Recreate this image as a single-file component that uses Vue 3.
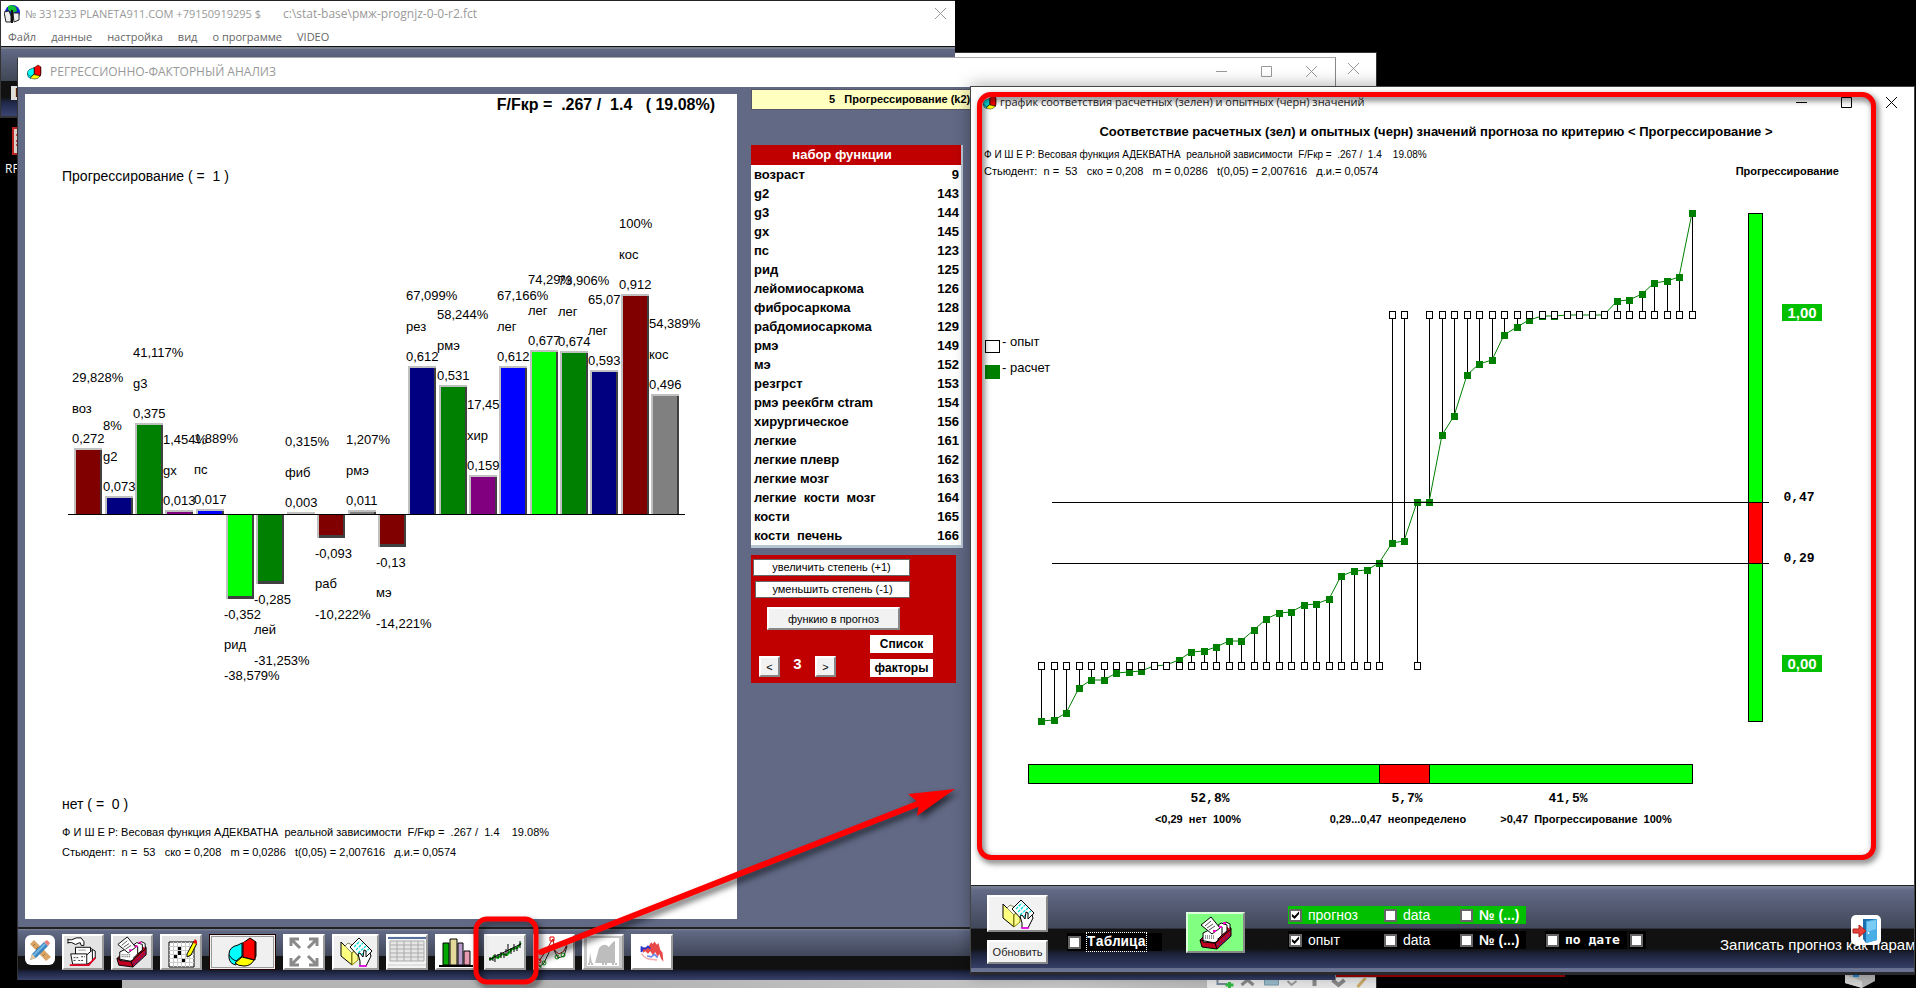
<script setup>
const bars = [
  { n: 'воз', v: '0,272', p: '29,828%', x: 74, h: 66, c: '#800000' },
  { n: 'g2', v: '0,073', p: '8%', x: 105, h: 18, c: '#000080' },
  { n: 'g3', v: '0,375', p: '41,117%', x: 135, h: 91, c: '#008000' },
  { n: 'gx', v: '0,013', p: '1,454%', x: 165, h: 4, c: '#800080' },
  { n: 'пс', v: '0,017', p: '1,889%', x: 196, h: 5, c: '#0000ff' },
  { n: 'рид', v: '-0,352', p: '-38,579%', x: 226, h: -85, c: '#00ff00' },
  { n: 'лей', v: '-0,285', p: '-31,253%', x: 256, h: -70, c: '#008000' },
  { n: 'фиб', v: '0,003', p: '0,315%', x: 287, h: 2, c: '#c0c0c0' },
  { n: 'раб', v: '-0,093', p: '-10,222%', x: 317, h: -24, c: '#800000' },
  { n: 'рмэ', v: '0,011', p: '1,207%', x: 348, h: 4, c: '#808080' },
  { n: 'мэ', v: '-0,13', p: '-14,221%', x: 378, h: -33, c: '#800000' },
  { n: 'рез', v: '0,612', p: '67,099%', x: 408, h: 148, c: '#000080' },
  { n: 'рмэ', v: '0,531', p: '58,244%', x: 439, h: 129, c: '#008000' },
  { n: 'хир', v: '0,159', p: '17,45', x: 469, h: 39, c: '#800080' },
  { n: 'лег', v: '0,612', p: '67,166%', x: 499, h: 148, c: '#0000ff' },
  { n: 'лег', v: '0,677', p: '74,29%', x: 530, h: 164, c: '#00ff00' },
  { n: 'лег', v: '0,674', p: '73,906%', x: 560, h: 163, c: '#008000' },
  { n: 'лег', v: '0,593', p: '65,07', x: 590, h: 144, c: '#000080' },
  { n: 'кос', v: '0,912', p: '100%', x: 621, h: 220, c: '#800000' },
  { n: 'кос', v: '0,496', p: '54,389%', x: 651, h: 120, c: '#808080' },
].map((b) => {
  const up = b.h > 0
  const edge = 514 - b.h
  return {
    ...b,
    up,
    top: up ? edge : 514,
    len: Math.abs(b.h),
    tx: b.x - 2,
    ys: up ? [edge - 5, edge - 35, edge - 66] : [edge + 20, edge + 50, edge + 81],
  }
})

const factors = [
  ['возраст', 9], ['g2', 143], ['g3', 144], ['gx', 145], ['пс', 123], ['рид', 125],
  ['лейомиосаркома', 126], ['фибросаркома', 128], ['рабдомиосаркома', 129], ['рмэ', 149],
  ['мэ', 152], ['резгрст', 153], ['рмэ реекбгм ctram', 154], ['хирургическое', 156],
  ['легкие', 161], ['легкие плевр', 162], ['легкие мозг', 163], ['легкие  кости  мозг', 164],
  ['кости', 165], ['кости  печень', 166],
]

const calc = [
  721, 720, 713, 688, 680, 680, 673, 672, 671, 666, 665, 660, 652, 651, 647, 641, 641, 630, 619,
  613, 612, 605, 604, 599, 576, 571, 570, 563, 543, 541, 502, 502, 435, 416, 375, 364, 360, 335,
  327, 320, 316, 316, 315, 315, 315, 315, 301, 300, 294, 283, 281, 277, 213,
]
const points = calc.map((y, i) => ({
  x: Math.round(1041 + (i * 651) / 52),
  y,
  e: i < 28 || i === 30 ? 666 : 315,
}))
const line = points.map((p) => `${p.x},${p.y}`).join(' ')
const menu = ['Файл', 'данные', 'настройка', 'вид', 'о программе', 'VIDEO']
const fisher = 'Ф И Ш Е Р: Весовая функция АДЕКВАТНА  реальной зависимости  F/Fкр =  .267 /  1.4    19.08%'
const student = 'Стьюдент:  n =  53   ско = 0,208   m = 0,0286   t(0,05) = 2,007616   д.и.= 0,0574'
</script>

<template>
  <main class="desktop">
    <svg class="defs" aria-hidden="true">
      <symbol id="pie" viewBox="0 0 30 30">
        <path d="M14 6 10 8Q1 10 1 17v4q1 6 7 7l6-9z" fill="#0ff" stroke="#000" />
        <path d="M15 6 22 1l6 4v14l-2 4-11-3z" fill="#f00" stroke="#000" />
        <path d="M15 5v15l12 3V5" fill="#f00" stroke="#000" />
        <path d="M14 20 26 23q-3 6-10 6-6 0-9-3z" fill="#ff0" stroke="#000" />
        <path d="M1 18q3 5 7 6l6-5" fill="none" stroke="#000" />
      </symbol>
      <symbol id="folder" viewBox="0 0 34 32">
        <path d="M2 6 13 17v12L2 20z" fill="#ffff80" stroke="#000" />
        <path d="M13 17 18 11 9 7 6 10z" fill="#ffe" stroke="#886" />
        <path d="M13 29 19 24V12l-6 5z" fill="#ffff90" stroke="#880" />
        <path d="M11 11 20 2 33 15 24 25z" fill="#fff" stroke="#000" />
        <path d="M15 11 21 5M17 14 24 7M19 17 27 10M22 19 30 13" stroke="#0dd" stroke-width="1.3" stroke-dasharray="3 1" />
        <path d="M21 30v-5l-2-7 2-1 3 4 1-7 2 1v6l4-4 1 3-3 6-2 4z" fill="#fff" stroke="#000" />
        <path d="M20 30h8" stroke="#f0f" stroke-width="1.5" />
      </symbol>
      <symbol id="cards" viewBox="0 0 34 34">
        <path d="M1 24 7 18 26 9 32 12v8L18 33 3 31z" fill="#c00020" stroke="#000" />
        <path d="M4 26V17l6-3 9 2v9l-4 2z" fill="#fff" stroke="#000" />
        <path d="M12 15V12l5-3 6 2v8l-4 4M18 10l4-3 6 2v6l-5 4M24 8l3-2 4 2v5" fill="#fff" stroke="#000" />
        <path d="M2 9 12 1l9 11-8 6z" fill="#fff" stroke="#000" />
        <path d="M6 10 12 5M8 12 14 8M10 14 16 10" stroke="#555" />
        <path d="M6 20h9M6 22h9" stroke="#333" stroke-dasharray="1 1" />
        <path d="M1 24 16 27 32 13M16 27l2 6" fill="none" stroke="#000" />
        <path d="M18 29 32 16M20 30 32 19" stroke="#33c" stroke-dasharray="2 2" />
        <path d="M14 15h3M20 11h3M24 7h3" stroke="#f0c" stroke-width="2" />
      </symbol>
    </svg>

    <div class="shortcut">
      <svg width="30" height="28" viewBox="0 0 30 28"><path d="M1 1h28v26H1z" fill="#d8cfc8" stroke="#b22" stroke-width="2" /><path d="M4 8h22M4 14h22M4 18h22" stroke="#b44" stroke-width="2" /></svg>
      <span>RF.</span>
    </div>

    <section class="win back">
      <header class="titlebar"><button class="sys" aria-label="Закрыть"><svg width="11" height="11"><path d="M0 0 11 11M11 0 0 11" /></svg></button></header>
      <div class="back-body"></div>
      <footer class="back-tools">
        <svg width="160" height="10" viewBox="0 0 160 10">
          <path d="M6 0V6H16" fill="none" stroke="#789" stroke-width="2" />
          <path d="M18 4v6M14 7h8" stroke="#3b4" stroke-width="3" />
          <path d="M30 7 36 2l6 5" fill="none" stroke="#888" stroke-width="3" />
          <path d="M53 0v7h14V0" fill="#9bc" stroke="#79a" />
          <path d="M76 3 80 7l5-4" fill="none" stroke="#999" stroke-width="2" />
          <path d="M103 0v8M121 2l6 5 6-5" fill="none" stroke="#888" stroke-width="4" />
          <path d="M146 9 154 0" stroke="#ca6" stroke-width="3" />
        </svg>
      </footer>
    </section>
    <div class="red-edge"></div>
    <svg class="cube" width="30" height="13" viewBox="0 0 30 13"><path d="M0 0h30v6L17 13 0 8z" fill="#b9b9b9" /><path d="M17 6v7L0 8V0z" fill="#d8d8d8" /><path d="M8 0h6v2H8z" fill="#28c" /></svg>

    <section class="win first">
      <header class="titlebar">
        <svg class="tico" width="17" height="18" viewBox="0 0 17 18">
          <circle cx="8.500" cy="7.500" r="7.500" fill="#1020d0" />
          <path d="M4 1Q8-1 12 2l1 4-4 2-5-3zM1 9l4-2 2 5-2 2z" fill="#10c030" />
          <path d="M0 7 5 6l2 5v6H2zM9 8h6v7l-5 2z" fill="#eee" stroke="#222" />
          <path d="M8 5v13" stroke="#111" stroke-width="2" />
        </svg>
        <span>№ 331233 PLANETA911.COM +79150919295 $</span>
        <span class="path">c:\stat-base\рмж-prognjz-0-0-r2.fct</span>
        <button class="sys end" aria-label="Закрыть"><svg width="11" height="11"><path d="M0 0 11 11M11 0 0 11" /></svg></button>
      </header>
      <nav class="menu"><button v-for="m in menu" :key="m">{{ m }}</button></nav>
      <div class="first-body"><span class="first-tag">E</span></div>
    </section>

    <section class="win analysis">
      <header class="titlebar">
        <svg class="tico" width="15" height="16"><use href="#pie" /></svg>
        <span>РЕГРЕССИОННО-ФАКТОРНЫЙ АНАЛИЗ</span>
        <button class="sys end" aria-label="Свернуть"><svg width="11" height="11"><path d="M0 5.500H11" /></svg></button>
        <button class="sys" aria-label="Развернуть"><svg width="11" height="11"><path d="M.5.5h10v10H.5z" /></svg></button>
        <button class="sys" aria-label="Закрыть"><svg width="11" height="11"><path d="M0 0 11 11M11 0 0 11" /></svg></button>
      </header>
      <div class="body">
        <div class="sheet">
          <h1>{{ 'F/Fкр =  .267 /  1.4   ( 19.08%)' }}</h1>
          <svg class="chart" viewBox="25 116 712 674">
            <text class="cat" x="62" y="181">{{ 'Прогрессирование ( =  1 )' }}</text>
            <g v-for="(b, i) in bars" :key="i">
              <rect :x="b.x" :y="b.top" width="28" :height="b.len" :fill="b.c" />
              <rect :x="b.x" :y="b.top" width="2" :height="b.len" fill="#c0c0c0" />
              <rect :x="b.x + 26" :y="b.top" width="2" :height="b.len" fill="#404040" />
              <rect v-if="b.up" :x="b.x" :y="b.top" width="28" height="2" fill="#c0c0c0" />
              <rect v-else :x="b.x + 2" :y="b.top + b.len - 3" width="26" height="3" fill="#404040" />
            </g>
            <g v-for="(b, i) in bars" :key="'t' + i" class="lab">
              <text :x="b.tx" :y="b.ys[0]">{{ b.v }}</text>
              <text :x="b.tx" :y="b.ys[1]">{{ b.n }}</text>
              <text :x="b.tx" :y="b.ys[2]">{{ b.p }}</text>
            </g>
            <path d="M68 514.500H685" stroke="#000" />
          </svg>
          <div class="notes">
            <p class="cat">{{ 'нет ( =  0 )' }}</p>
            <p>{{ fisher }}</p>
            <p>{{ student }}</p>
          </div>
        </div>
        <aside class="side">
          <div class="target">{{ '5   Прогрессирование (k2)' }}</div>
          <table class="factors">
            <thead><tr><th colspan="2">набор функции</th></tr></thead>
            <tbody><tr v-for="f in factors" :key="f[1]"><td>{{ f[0] }}</td><td>{{ f[1] }}</td></tr></tbody>
          </table>
          <div class="panel">
            <button class="flat">увеличить степень (+1)</button>
            <button class="flat second">уменьшить степень (-1)</button>
            <button class="raised">функию в прогноз</button>
            <div class="step">
              <button class="raised">&lt;</button><b>3</b><button class="raised">&gt;</button>
              <div class="lists"><button>Список</button><button>факторы</button></div>
            </div>
          </div>
        </aside>
      </div>
      <footer class="tools">
        <button class="pencil" aria-label="Инструменты"><svg width="30" height="30" viewBox="0 0 30 30"><path d="M5 9 9 5 26 22 21 26z" fill="#d9a566" /><path d="M8 11l2-2M11 14l2-2M18 21l2-2" stroke="#a67238" /><path d="M5 25 7 19 19 7l4 4L11 23z" fill="#3b86c0" /><path d="M8 21 20 9" stroke="#74b5e2" stroke-width="2" /><path d="M19 7 22 5l3 3-2 3z" fill="#e4827a" /><path d="M5 25 7 19l4 4z" fill="#e8c89a" /></svg></button>
        <button aria-label="Ввод"><svg width="34" height="32" viewBox="0 0 34 34"><path d="M9 12h16v8H9zM25 13l5 3v8l-6 4" fill="#fff" stroke="#000" /><path d="M4 19h17v11H6zM21 20l6-5v12l-6 3" fill="#fff" stroke="#000" /><path d="M1 3v5M1 4h4l5-2h5l3 4v4h-3l-1-3-5 2-4-2H1" fill="#fff" stroke="#000" /><path d="M7 23h6M15 22h4M7 26h3M12 26h5" stroke="#333" stroke-dasharray="2 1" /><path d="M12 15h8" stroke="#999" /><path d="M3 31h20l7-8" fill="none" stroke="#e00020" stroke-width="2" /></svg></button>
        <button aria-label="Печать"><svg width="34" height="32"><use href="#cards" /></svg></button>
        <button aria-label="Таблица данных"><svg width="32" height="32" viewBox="0 0 32 32"><path d="M4 6h25v25H4z" fill="#fff" stroke="#000" /><path d="M8.500 6v25M12.500 6v25M16.500 6v25M20.500 6v25M24.500 6v25M4 10.500h25M4 14.500h25M4 18.500h25M4 22.500h25M4 26.500h25" stroke="#ccc" /><path d="M13 11h3v3h-3zM13 15h3v4h-3zM9 19h3v3H9zM17 23h3v3h-3z" /><path d="M22 21V18l7-13 3 2-6 12z" fill="#ff0" stroke="#000" /><path d="M28 7l2-4 2 2v3z" fill="#e01010" /></svg></button>
        <button class="wide" aria-label="Диаграмма"><svg width="30" height="30"><use href="#pie" /></svg></button>
        <button class="light" aria-label="Развернуть график"><svg width="30" height="30" viewBox="0 0 30 30"><g fill="none" stroke="#8a8a8a" stroke-width="3"><path d="M2 9V2h8M3 3l8 8M20 2h8v7M27 3l-8 8M2 21v7h8M3 27l8-8M28 21v7h-8M27 27l-8-8" /></g></svg></button>
        <button class="mid" aria-label="Открыть"><svg width="34" height="32"><use href="#folder" /></svg></button>
        <button class="light" aria-label="Сетка"><svg width="38" height="32" viewBox="0 0 38 32"><path d="M0 0h38v32H0z" fill="#f4f4f4" /><path d="M0 2h38" stroke="#5671a0" stroke-width="2" /><path d="M2 5h34v20H2z" fill="#e6e6e6" stroke="#aaa" /><path d="M2 9h34M2 13h34M2 17h34M2 21h34M9 5v20M16 5v20M23 5v20M30 5v20" stroke="#aaa" /><path d="M0 29h38" stroke="#ccc" /></svg></button>
        <button class="light" aria-label="Столбцы"><svg width="36" height="32" viewBox="0 0 36 32"><path d="M5 7h6v22H5z" fill="#00a800" stroke="#000" /><path d="M12 3h7v26h-7z" fill="#e3d99a" stroke="#000" /><path d="M20 7h5v22h-5z" fill="#b79ccc" stroke="#000" /><path d="M26 15h6v14h-6z" fill="#e79ab0" stroke="#000" /><path d="M1 30h34" stroke="#000" stroke-width="2" /></svg></button>
        <button class="light corr" aria-label="Соответствие"><svg width="36" height="28" viewBox="0 0 36 28"><path d="M2 21h3l2-3 4 2 4-4 5 1 5-6 5-1 4-5" fill="none" stroke="#0a0" stroke-width="2" /><path d="M3 19v4M6 20v3M8 16v8M11 16v4M14 14v6M17 15v5M19 11v7M21 6v9M24 10v6M27 6v8M30 9v4M33 3v7M3 21 34 6" fill="none" stroke="#000" /></svg></button>
        <button class="light" aria-label="Точки"><svg width="36" height="34" viewBox="0 0 36 34"><g fill="none"><path d="M3 25 10 15l5-9 2-3 2 12 4 3 5-3 3-7" stroke="#a01010" /><path d="M3 31 8 27 16 10l6 12 6-2 3-10" stroke="#222" /><path d="M14 1h4v4h-4z" stroke="#e00" /><circle cx="3" cy="25" r="2" stroke="#e00" /><g stroke="#080"><circle cx="3" cy="31" r="2" /><circle cx="8" cy="27" r="2" /><circle cx="21" cy="21" r="2" /><circle cx="27" cy="19" r="2" /></g></g></svg></button>
        <button class="gray" aria-label="Площадь"><svg width="32" height="28" viewBox="0 0 32 28"><path d="M0 0h32v28H0z" fill="#fff" /><path d="M2 25l1-10 2 10h3L12 10q5-6 10-1 3-5 6-6v22z" fill="#bdbdbd" /><path d="M1 26h6M15 26h6M25 26h5" stroke="#777" stroke-dasharray="2 1" /></svg></button>
        <button class="light" aria-label="Поверхность"><svg width="26" height="28" viewBox="0 0 32 32"><path d="M4 12 8 10l4-1 3-5 2 2 2-3 3 4 2-2 2 8 3 4 1 11-3-4-2-6-2 4-3-6-3 4-3-5-3 3-3-3-3 2z" fill="#e84848" /><path d="M3 9v7l2-5 3 1 3-3 3 3" fill="none" stroke="#23c" stroke-width="2" /><path d="M3 18q6 8 13 7l6 1" fill="none" stroke="#f4b0b0" stroke-width="2" /><path d="M10 21l5 1 4-3 4 4" fill="none" stroke="#68e" stroke-width="2" /></svg></button>
      </footer>
    </section>

    <section class="win fit">
      <header class="titlebar">
        <svg class="tico" width="14" height="15"><use href="#pie" /></svg>
        <span>график соответствия расчетных (зелен) и опытных (черн) значений</span>
        <button class="sys end" aria-label="Свернуть"><svg width="11" height="11"><path d="M0 5.500H11" /></svg></button>
        <button class="sys" aria-label="Развернуть"><svg width="11" height="11"><path d="M.5.5h10v10H.5z" /></svg></button>
        <button class="sys" aria-label="Закрыть"><svg width="11" height="11"><path d="M0 0 11 11M11 0 0 11" /></svg></button>
      </header>
      <div class="fit-body">
        <h2>Соответствие расчетных (зел) и опытных (черн) значений прогноза по критерию &lt; Прогрессирование &gt;</h2>
        <p class="small">{{ fisher }}</p>
        <div class="student"><p>{{ student }}</p><b>Прогрессирование</b></div>
        <svg class="chart" viewBox="972 180 942 705">
          <rect x="985.500" y="340.500" width="14" height="12" fill="#fff" stroke="#000" />
          <rect x="985" y="365" width="15" height="14" fill="#008000" />
          <text class="leg" x="1002" y="346">- опыт</text>
          <text class="leg" x="1002" y="372">- расчет</text>

          <g shape-rendering="crispEdges">
            <path v-for="(p, i) in points" :key="'s' + i" :d="`M${p.x + 0.5} ${p.e}V${p.y}`" stroke="#000" />
          </g>
          <polyline :points="line" fill="none" stroke="#008000" />
          <rect v-for="(p, i) in points" :key="'g' + i" :x="p.x - 3" :y="p.y - 3" width="7" height="7" fill="#008000" />
          <rect v-for="(p, i) in points" :key="'w' + i" :x="p.x - 2.5" :y="p.e - 3.5" width="6" height="7" fill="#fff" stroke="#000" />

          <rect x="1748.500" y="213.500" width="14" height="508" fill="#0f0" stroke="#000" />
          <rect x="1749" y="502" width="13" height="61" fill="#f00" />
          <path d="M1052 502.500H1769M1052 563.500H1769" stroke="#000" />
          <rect x="1782" y="304" width="40" height="17" fill="#00c000" />
          <rect x="1782" y="655" width="40" height="17" fill="#00c000" />
          <text class="lvl" x="1802" y="318">1,00</text>
          <text class="lvl" x="1802" y="669">0,00</text>
          <text class="mono" x="1799" y="501">0,47</text>
          <text class="mono" x="1799" y="562">0,29</text>

          <rect x="1028.500" y="764.500" width="664" height="19" fill="#0f0" stroke="#000" />
          <rect x="1379.500" y="764.500" width="50" height="19" fill="#f00" stroke="#000" />
          <text class="mono" x="1210" y="802">52,8%</text>
          <text class="mono" x="1407" y="802">5,7%</text>
          <text class="mono" x="1568" y="802">41,5%</text>
          <text class="rng" x="1198" y="823">{{ '<0,29  нет  100%' }}</text>
          <text class="rng" x="1398" y="823">{{ '0,29...0,47  неопределено' }}</text>
          <text class="rng" x="1586" y="823">{{ '>0,47  Прогрессирование  100%' }}</text>
        </svg>
      </div>
      <footer class="fit-tools">
        <div class="pair">
          <button class="raised open" aria-label="Открыть"><svg width="34" height="32"><use href="#folder" /></svg></button>
          <button class="raised">Обновить</button>
        </div>
        <label class="chk tab"><input type="checkbox"><span>Таблица</span></label>
        <button class="print" aria-label="Печать"><svg width="34" height="34"><use href="#cards" /></svg></button>
        <div class="checks">
          <div class="row green">
            <label class="chk a"><input type="checkbox" checked><span>прогноз</span></label>
            <label class="chk b"><input type="checkbox"><span>data</span></label>
            <label class="chk c"><input type="checkbox"><b>№ (...)</b></label>
          </div>
          <div class="row">
            <label class="chk a"><input type="checkbox" checked><span>опыт</span></label>
            <label class="chk b"><input type="checkbox"><span>data</span></label>
            <label class="chk c"><input type="checkbox"><b>№ (...)</b></label>
            <label class="chk d"><input type="checkbox"><span>по дате</span></label>
            <label class="chk e"><input type="checkbox" aria-label="Дополнительно"></label>
          </div>
        </div>
        <div class="save">
          <span>Записать прогноз как парам</span>
          <button aria-label="Выход"><svg width="30" height="30" viewBox="0 0 30 30"><path d="M12 4H26V25L15 28 12 24z" fill="#1b6fae" /><path d="M15 6 26 4V25L15 28z" fill="#4aaee6" /><path d="M16 7 25 5v9l-9 3z" fill="#7accf4" /><circle cx="17.500" cy="18" r="1" fill="#fff" /><path d="M2 14h6v-4l7 6-7 6v-4H2z" fill="#e8403a" stroke="#b02018" /></svg></button>
        </div>
      </footer>
      <div class="frame"></div>
    </section>

    <svg class="arrow" width="500" height="213" viewBox="465 775 500 213">
      <rect x="476" y="919" width="60" height="63" rx="11" fill="none" stroke="#f00" stroke-width="5" />
      <path d="M541 952 920 803" stroke="#f00" stroke-width="6" stroke-linecap="round" />
      <path d="M955 789 908 794 919 803 917 816z" fill="#f00" />
    </svg>
  </main>
</template>

<style>
html, body { background: #000; }
</style>
<style scoped>
* { box-sizing: border-box; }
p, h1, h2 { margin: 0; font-weight: normal; }
.desktop {
  position: relative; height: 100vh; overflow: hidden; background: #000; color: #000;
  font: 13px/16px "Liberation Sans", Arial, sans-serif; white-space: pre;
}
button { font: inherit; color: inherit; padding: 0; margin: 0; border: 0; background: none; white-space: pre; }
.defs { position: absolute; width: 0; height: 0; }
.win { position: absolute; display: flex; flex-direction: column; overflow: hidden; }
.titlebar {
  flex: none; display: flex; align-items: center; background: #fff; color: #999;
  font: 12px/16px "Open Sans", "Noto Sans", sans-serif;
}
.sys { width: 45px; height: 20px; display: grid; place-items: center; }
.sys svg { fill: none; stroke: currentColor; }
.end { margin-left: auto; }

.shortcut { position: absolute; left: 5px; top: 127px; color: #fff; font: 12px/16px "Open Sans", sans-serif; display: flex; flex-direction: column; gap: 6px; }
.shortcut svg { margin-left: 7px; }

.back { left: 122px; right: calc(25% + 60px); top: 52px; bottom: 0; border-top: 1px solid #333; border-right: 1px solid #333; background: #b8b8b8; }
.back .titlebar { height: 34px; padding-bottom: 4px; justify-content: flex-end; }
.back-body { flex: 1; background: #b8b8b8; }
.back-tools { height: 10px; display: flex; justify-content: flex-end; background: linear-gradient(90deg, #b4b4b4 0 40%, #c8c8c8 75%, #aaa); }
.back-tools svg { background: #e8e8e8; width: 169px; height: 10px; }
.red-edge { position: absolute; left: calc(50% + 377px); right: 351px; bottom: 11px; height: 3px; background: #a00000; }
.cube { position: absolute; right: 41px; bottom: 0; }

.first { left: 0; width: calc(50% - 3px); top: 0; border-top: 1px solid #222; border-left: 1px solid #333; }
.first .titlebar { height: 25px; padding-left: 3px; font-size: 11px; }
.first .tico { margin-right: 4px; }
.first .path { margin-left: 22px; font-size: 12px; }
.first .sys { width: 30px; }
.menu { display: flex; gap: 15px; height: 21px; padding-left: 7px; background: #fff; color: #666; font: 11px/19px "Open Sans", "Noto Sans", sans-serif; border-bottom: 1px solid #111; }
.first-body { height: 71px; border-top: 2px solid #7c8290; border-bottom: 2px solid #333; background: linear-gradient(#616985 0, #3f4654 48%, #111 48%, #111 72%, #20284a 80%, #3a4470); }
.first-tag { display: block; width: 20px; margin: 37px 0 0 10px; padding-left: 4px; background: #ddd; line-height: 14px; }

.analysis { left: 17px; right: calc(25% + 101px); top: 57px; bottom: 8px; border-left: 1px solid #333; border-top: 1px solid #aaa; border-right: 1px solid #888; background: #616985; }
.analysis .titlebar { height: 29px; padding: 0 1px 2px 9px; }
.analysis .tico { margin-right: 8px; }
.body { flex: 1; min-height: 0; display: grid; grid-template-columns: minmax(0, 1fr) 212px; column-gap: 14px; padding: 7px 372px 8px 7px; align-items: stretch; }
.sheet { background: #fff; overflow: hidden; display: flex; flex-direction: column; }
h1 { text-align: right; padding: 1px 22px 1px 0; font: bold 16px/20px "Liberation Sans", Arial, sans-serif; }
.chart { display: block; width: 100%; flex: none; }
text { white-space: pre; }
.cat { font-size: 14px; }
.lab { font-size: 13px; }
.notes { padding-left: 37px; font-size: 11px; line-height: 20px; }
.notes .cat { line-height: 28px; height: 32px; }

.side { display: flex; flex-direction: column; align-items: flex-start; padding: 0; margin-top: -5px; }
.target { width: 260px; height: 21px; background: #ffffc0; border: 1px solid #556; padding-left: 77px; line-height: 18px; font-weight: bold; font-size: 11px; margin-bottom: 35px; }
.factors { width: 212px; border-collapse: collapse; background: #fff; font-weight: bold; border-right: 2px solid #b8c6d4; border-bottom: 3px solid #b8c6d4; table-layout: fixed; }
.factors th { height: 20px; padding: 0 28px 0 0; background: #c00000; color: #fff; }
.factors td { height: 19px; padding: 0 0 0 3px; line-height: 19px; }
.factors td:first-child { width: 160px; }
.factors td:last-child { text-align: right; padding-right: 2px; }
.panel { width: 205px; margin-top: 7px; padding: 4px 2px 6px; background: #c00000; display: flex; flex-direction: column; align-items: flex-start; font-size: 12px; }
.flat { width: 157px; height: 17px; background: #fff; border: 1px solid #666; font-size: 11px; line-height: 13px; margin-bottom: 5px; }
.flat.second { width: 155px; margin: 0 0 9px 2px; }
.raised { background: #f2f2f2; border: 2px solid; border-color: #fff #888 #888 #fff; font-size: 11px; line-height: 14px; }
.panel > .raised { width: 133px; height: 23px; margin-left: 14px; }
.step { display: flex; align-items: flex-end; margin-top: 5px; padding-left: 6px; color: #000; }
.step > .raised { width: 21px; height: 21px; }
.step > b { width: 35px; text-align: center; color: #fff; font-size: 15px; line-height: 26px; }
.lists { display: flex; flex-direction: column; gap: 6px; margin-left: 34px; }
.lists button { width: 63px; height: 18px; background: #fff; font-weight: bold; font-size: 12px; line-height: 15px; }

.tools { flex: none; height: 53px; display: flex; gap: 7px; padding: 5px 7px 0; border-top: 2px solid #222; background: linear-gradient(#7c8498 0, #616985 4%, #41485a 52%, #111 53%, #111 78%, #1c2340 84%, #38426a); }
.tools button { width: 42px; height: 36px; flex: none; display: grid; place-items: center; background: #e4e4e4; border: 2px solid; border-color: #fff #999 #999 #fff; overflow: hidden; }
.tools .pencil { width: 30px; height: 30px; margin-top: 1px; border: 0; border-radius: 6px; background: #fff; }
.tools .wide { width: 67px; border: 1px solid #200; outline: 1px solid #999; outline-offset: -3px; background: #f0f0f0; }
.tools .mid { width: 47px; background: #f0f0f0; }
.tools .light { background: #fff; }
.tools .gray { background: #c8c8c8; }
.tools .corr { background: #f0f0f0; }

.fit { left: calc(50% + 12px); right: 1px; top: 86px; bottom: 13px; background: #fff; border: 1px solid #444; border-bottom: 3px solid #2a2a2e; box-shadow: 0 0 16px rgba(0, 0, 0, .35); }
.fit .titlebar { height: 30px; color: #222; padding-left: 12px; font-size: 11px; }
.fit .tico { margin-right: 3px; }
.fit .sys { color: #000; }
.fit-body { flex: 1; min-height: 0; overflow: hidden; padding-left: 1px; }
h2 { text-align: center; font-weight: bold; font-size: 13px; line-height: 20px; padding: 5px 14px 0 0; }
.small { font-size: 10px; line-height: 20px; padding: 3px 0 0 12px; }
.student { display: flex; justify-content: space-between; padding: 0 75px 3px 12px; font-size: 11px; line-height: 12px; }
.leg { font-size: 13px; }
.lvl { font-size: 15px; font-weight: bold; fill: #fff; text-anchor: middle; }
.mono { font: bold 13px "Liberation Mono", monospace; text-anchor: middle; }
.rng { font-size: 11px; font-weight: bold; text-anchor: middle; }

.fit-tools { flex: none; height: 87px; display: flex; align-items: flex-start; border-top: 1px solid #222; padding-left: 1px; color: #fff; background: linear-gradient(#7c8498 0, #616985 5%, #41485a 49%, #111 50%, #111 73%, #1a2036 78%, #363f66 95%, #6a7392 96%); }
.pair { display: flex; flex-direction: column; gap: 8px; padding: 9px 0 0 15px; color: #222; }
.pair .raised { width: 61px; height: 24px; font-size: 11px; }
.pair .open { height: 37px; display: grid; place-items: center; }
.chk { display: flex; align-items: center; height: 18px; gap: 6px; padding-left: 1px; background: #000; font-size: 14px; }
.chk input { appearance: none; flex: none; width: 13px; height: 13px; margin: 0; border: 2px solid #666; background: #fff; }
.chk input:checked::before { content: ""; display: block; width: 9px; height: 9px; background: #000; clip-path: polygon(10% 40%, 40% 62%, 90% 8%, 90% 40%, 40% 95%, 10% 68%); }
.tab { width: 95px; margin: 47px 0 0 19px; font: bold 14px/18px "Liberation Mono", monospace; }
.tab span { outline: 1px dotted #fff; }
.print { width: 59px; height: 41px; margin: 26px 0 0 24px; background: #80ff80; border: 2px solid; border-color: #dfd #888 #888 #dfd; display: grid; place-items: center; }
.checks { display: flex; flex-direction: column; gap: 7px; margin: 20px 0 0 43px; }
.row { display: flex; }
.row .a { width: 95px; }
.row .b { width: 76px; }
.row .c { width: 67px; }
.row .d { width: 82px; margin: 0 2px 0 19px; font: bold 13px/18px "DejaVu Sans Mono", monospace; }
.row .e { width: 17px; }
.green .chk { background: #00c000; }
.save { flex: 1; min-width: 0; position: relative; margin-left: 74px; font-size: 15px; height: 80px; overflow: hidden; padding-top: 51px; }
.save button { position: absolute; right: 33px; top: 29px; width: 30px; height: 30px; background: #fff; border-radius: 5px; }
.frame { position: absolute; inset: 5px 38px 112px 6px; border: 5px solid #f00; border-radius: 14px; pointer-events: none; filter: drop-shadow(2px 3px 3px rgba(0, 0, 0, .65)); }
.arrow { position: absolute; left: 465px; top: 775px; pointer-events: none; filter: drop-shadow(3px 4px 3px rgba(0, 0, 0, .6)); }
</style>
